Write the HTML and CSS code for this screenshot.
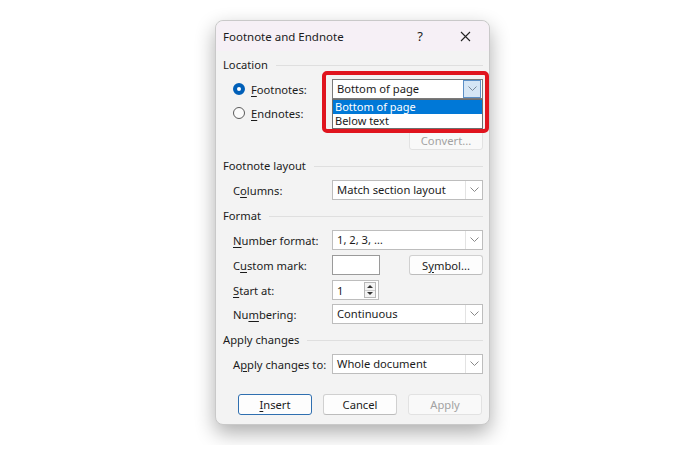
FILE: index.html
```html
<!DOCTYPE html>
<html lang="en">
<head>
    <meta charset="UTF-8">
    <title>Footnote and Endnote</title>
    <link rel="stylesheet" href="styles.css">
</head>
<body>

    <div class="dialog">
        <!-- Title bar -->
        <div class="titlebar">
            <div class="title">Footnote and Endnote</div>
            <div class="help">?</div>
            <div class="close">
                <svg width="11" height="11" viewBox="0 0 11 11"><path d="M1 1 L10 10 M10 1 L1 10" stroke="#222" stroke-width="1.1"/></svg>
            </div>
        </div>

        <div class="content">
            <!-- Location -->
            <div class="group">Location</div>
            <div class="row row-loc1">
                <label class="radio-label"><span class="radio checked"></span><span><u>F</u>ootnotes:</span></label>
                <div class="select open">
                    <span>Bottom of page</span>
                    <span class="arrow"><svg width="9" height="6" viewBox="0 0 9 6"><path d="M0.5 0.5 L4.5 4.5 L8.5 0.5" fill="none" stroke="#7a8a9a" stroke-width="1"/></svg></span>
                </div>
            </div>
            <div class="row row-loc2">
                <label class="radio-label"><span class="radio"></span><span><u>E</u>ndnotes:</span></label>
            </div>
            <div class="row row-convert">
                <div class="btn disabled small">Convert...</div>
            </div>

            <!-- Footnote layout -->
            <div class="group gap-group">Footnote layout</div>
            <div class="row row-first">
                <span class="label">C<u>o</u>lumns:</span>
                <div class="select">
                    <span>Match section layout</span>
                    <span class="arrow"><svg width="9" height="6" viewBox="0 0 9 6"><path d="M0.5 0.5 L4.5 4.5 L8.5 0.5" fill="none" stroke="#888" stroke-width="1"/></svg></span>
                </div>
            </div>

            <!-- Format -->
            <div class="group gap-group">Format</div>
            <div class="row row-first">
                <span class="label"><u>N</u>umber format:</span>
                <div class="select">
                    <span>1, 2, 3, …</span>
                    <span class="arrow"><svg width="9" height="6" viewBox="0 0 9 6"><path d="M0.5 0.5 L4.5 4.5 L8.5 0.5" fill="none" stroke="#888" stroke-width="1"/></svg></span>
                </div>
            </div>
            <div class="row">
                <span class="label">C<u>u</u>stom mark:</span>
                <div class="input mark"></div>
                <div class="btn small">S<u>y</u>mbol...</div>
            </div>
            <div class="row">
                <span class="label"><u>S</u>tart at:</span>
                <div class="input spin">
                    <span>1</span>
                    <span class="spin-btns">
                        <span class="spin-up"></span>
                        <span class="spin-down"></span>
                    </span>
                </div>
            </div>
            <div class="row row-tight">
                <span class="label">Nu<u>m</u>bering:</span>
                <div class="select">
                    <span>Continuous</span>
                    <span class="arrow"><svg width="9" height="6" viewBox="0 0 9 6"><path d="M0.5 0.5 L4.5 4.5 L8.5 0.5" fill="none" stroke="#888" stroke-width="1"/></svg></span>
                </div>
            </div>

            <!-- Apply changes -->
            <div class="group gap-group">Apply changes</div>
            <div class="row row-first">
                <span class="label">A<u>p</u>ply changes to:</span>
                <div class="select">
                    <span>Whole document</span>
                    <span class="arrow"><svg width="9" height="6" viewBox="0 0 9 6"><path d="M0.5 0.5 L4.5 4.5 L8.5 0.5" fill="none" stroke="#888" stroke-width="1"/></svg></span>
                </div>
            </div>

            <!-- Buttons -->
            <div class="buttons">
                <div class="btn primary"><u>I</u>nsert</div>
                <div class="btn">Cancel</div>
                <div class="btn disabled">Apply</div>
            </div>
        </div>

        <!-- Open dropdown list -->
        <div class="dropdown">
            <div class="option selected">Bottom of page</div>
            <div class="option">Below text</div>
        </div>

        <!-- Red highlight annotation -->
        <div class="highlight"></div>
    </div>

</body>
</html>
```

FILE: styles.css
```css
body {
    margin: 0;
    padding: 0 0 20px;
    background-color: #ffffff;
    font-family: 'Noto Sans', 'Open Sans', sans-serif;
    font-size: 11.2px;
    color: #1b1b1b;
}

u {
    text-decoration-thickness: 1px;
    text-underline-offset: 2px;
}

/* Dialog window */
.dialog {
    position: relative;
    width: 273px;
    margin: 20px 0 0 215px;
    background-color: #f3f3f3;
    border: 1px solid #c9c9c9;
    border-radius: 8px;
    box-shadow: 0 8px 20px rgba(0, 0, 0, 0.32);
}

.titlebar {
    display: flex;
    align-items: center;
    height: 30px;
    padding: 0 0 0 7px;
    background-color: #f6f0f6; /* Pink mica tint */
    border-radius: 8px 8px 0 0;
    font-size: 11.5px;
}

.titlebar .title {
    flex: 1;
}

.titlebar .help {
    width: 20px;
    text-align: center;
    margin-right: 25px;
    font-size: 13px;
}

.titlebar .close {
    width: 20px;
    display: flex;
    justify-content: center;
    margin-right: 14px;
}

.content {
    padding: 6px 6px 9px 7px;
}

/* Group headings with a rule */
.group {
    display: flex;
    align-items: center;
    height: 16px;
    line-height: 16px;
}

.group::after {
    content: '';
    flex: 1;
    margin-left: 8px;
    border-top: 1px solid #dfdfdf;
}

.gap-group {
    margin-top: 8px;
}

/* Rows */
.row {
    display: flex;
    align-items: center;
    height: 20px;
    margin-top: 5px;
    padding-left: 10px;
}

.row-first {
    margin-top: 6px;
}

.row-tight {
    margin-top: 4px;
}

.row-loc1 {
    margin-top: 6px;
}

.row-loc2 {
    margin-top: 4px;
}

.row-convert {
    margin-top: 7px;
    justify-content: flex-end;
}

.label {
    width: 99px;
}

.radio-label {
    display: flex;
    align-items: center;
    width: 99px;
}

.radio {
    width: 10px;
    height: 10px;
    border: 1px solid #5b5b5b;
    border-radius: 50%;
    background-color: #fbfbfb;
    margin-right: 6px;
    box-sizing: content-box;
}

.radio.checked {
    width: 4px;
    height: 4px;
    border: 4px solid #005fb8;
    background-color: #ffffff;
}

/* Combo boxes */
.select {
    display: flex;
    align-items: center;
    width: 151px;
    height: 20px;
    box-sizing: border-box;
    background-color: #ffffff;
    border: 1px solid #bdbdbd;
    padding-left: 4px;
    line-height: 16px;
}

.select span:first-child {
    flex: 1;
}

.select .arrow {
    display: flex;
    align-items: center;
    justify-content: center;
    width: 16px;
    height: 18px;
    border-left: 1px solid #e3e3e3;
}

.select.open {
    border-color: #7a7a7a;
}

.select.open .arrow {
    background-color: #d5e6f5;
    border: 1px solid #5b8fc6;
    height: 16px;
    margin-right: 1px;
}

.input {
    height: 20px;
    box-sizing: border-box;
    background-color: #ffffff;
    border: 1px solid #9a9a9a;
}

.mark {
    width: 48px;
    margin-right: 29px;
}

.spin {
    display: flex;
    align-items: center;
    width: 47px;
    padding-left: 4px;
    border-color: #bdbdbd;
}

.spin span:first-child {
    flex: 1;
}

.spin-btns {
    display: flex;
    flex-direction: column;
    width: 12px;
    height: 16px;
    margin-right: 2px;
    border: 1px solid #b8b8b8;
    background-color: #f4f4f4;
    box-sizing: border-box;
}

.spin-up,
.spin-down {
    flex: 1;
    display: flex;
    justify-content: center;
    align-items: center;
}

.spin-up::before {
    content: '';
    border-left: 3px solid transparent;
    border-right: 3px solid transparent;
    border-bottom: 3px solid #333;
}

.spin-down {
    border-top: 1px solid #cfcfcf;
}

.spin-down::before {
    content: '';
    border-left: 3px solid transparent;
    border-right: 3px solid transparent;
    border-top: 3px solid #333;
}

/* Buttons */
.btn {
    display: flex;
    align-items: center;
    justify-content: center;
    width: 74px;
    height: 21px;
    box-sizing: border-box;
    background-color: #fdfdfd;
    border: 1px solid #d0d0d0;
    border-bottom-color: #bcbcbc;
    border-radius: 3px;
}

.btn.small {
    height: 20px;
}

.btn.disabled {
    color: #a2a2a2;
    background-color: #f9f9f9;
    border-color: #e2e2e2;
}

.btn.primary {
    border: 1px solid #2f6fb0;
}

.buttons {
    display: flex;
    justify-content: flex-end;
    gap: 11px;
    margin-top: 20px;
    padding-right: 1px;
}

/* Dropdown list overlay */
.dropdown {
    position: absolute;
    left: 116px;
    top: 78px;
    width: 151px;
    box-sizing: border-box;
    background-color: #ffffff;
    border: 1px solid #6e6e6e;
    font-size: 11px;
    line-height: 14px;
}

.option {
    padding-left: 2px;
    height: 14px;
    overflow: hidden;
}

.option.selected {
    background-color: #0078d7;
    color: #ffffff;
}

/* Red annotation box */
.highlight {
    position: absolute;
    left: 106px;
    top: 50px;
    width: 167px;
    height: 62px;
    box-sizing: border-box;
    border: 4px solid #e0141e;
    border-radius: 5px;
}
```
